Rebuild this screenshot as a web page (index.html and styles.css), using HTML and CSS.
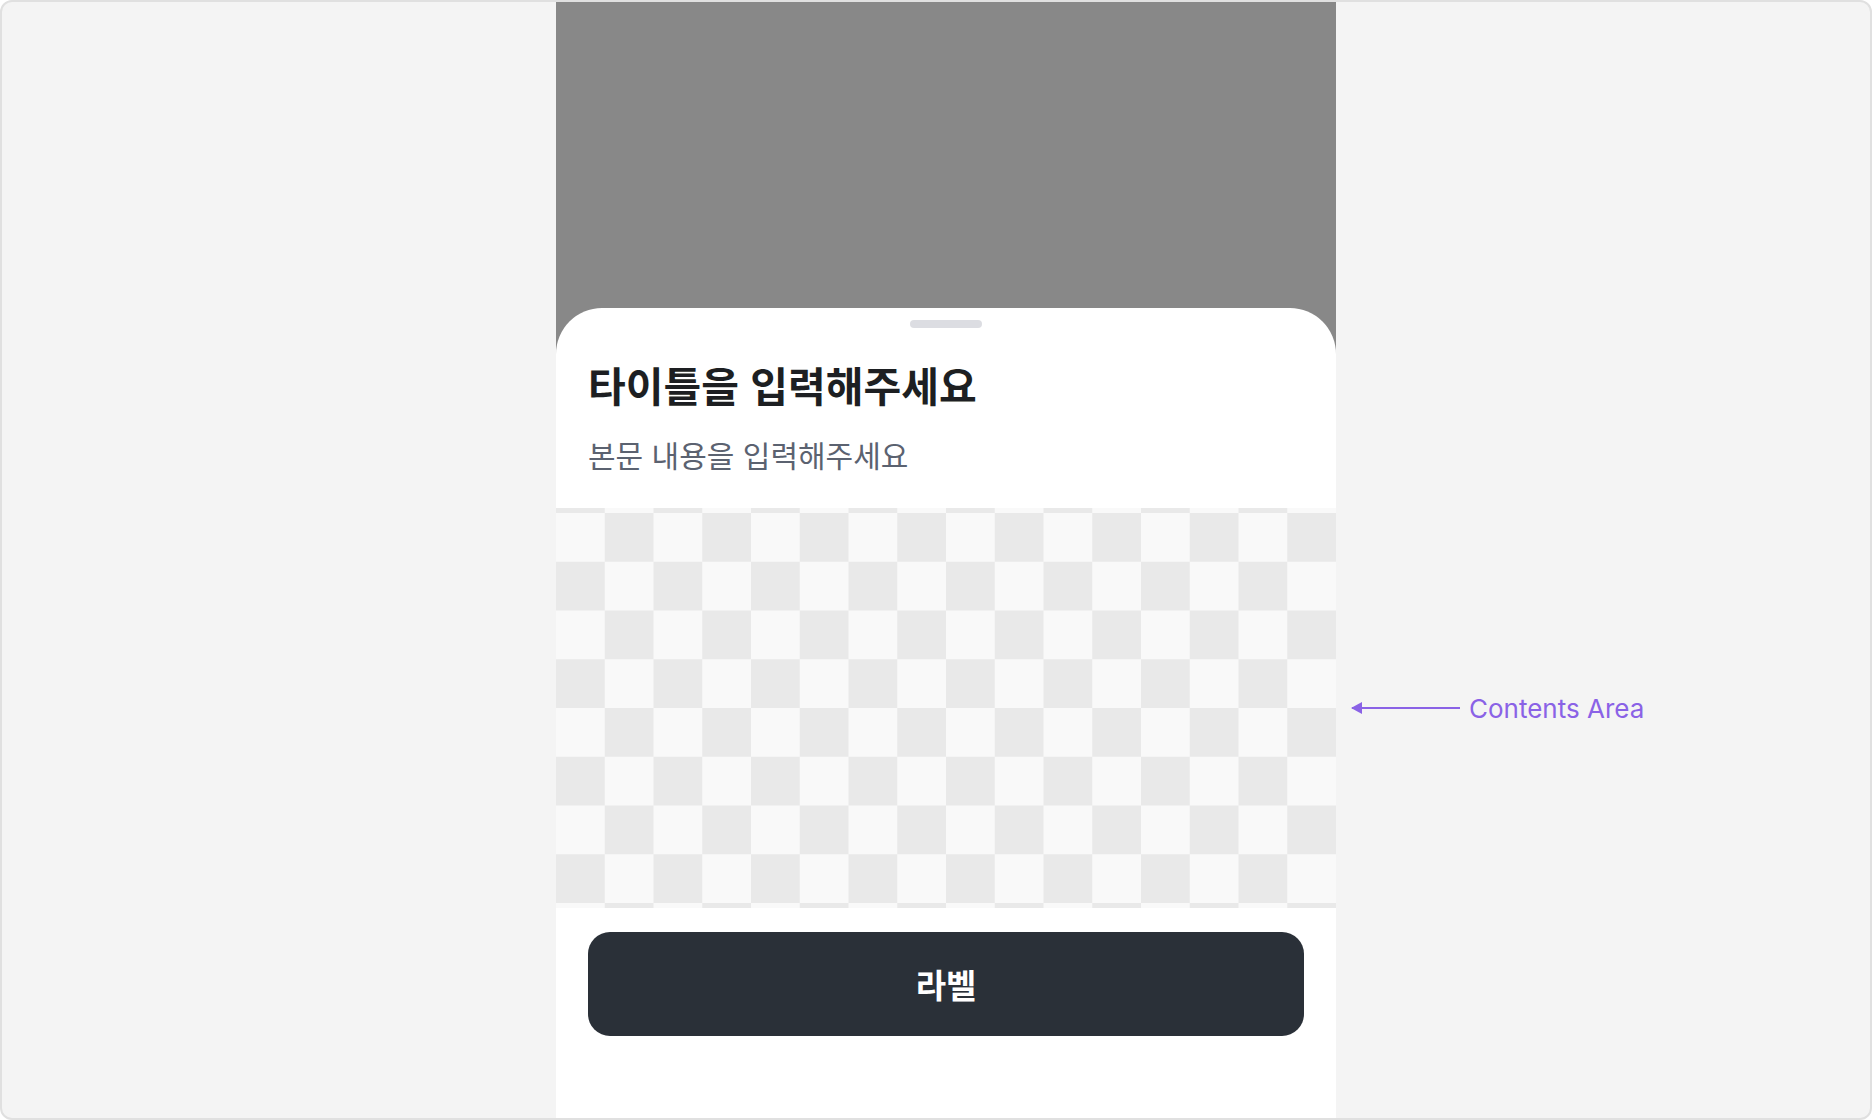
FILE: index.html
```html
<!DOCTYPE html>
<html lang="ko">
<head>
	<meta charset="utf-8">
	<title>Bottom Sheet</title>
	<link rel="stylesheet" href="styles.css">
</head>
<body>
	<div class="frame">
		<div class="side"></div>
		<div class="phone">
			<div class="dim"></div>
			<div class="sheet">
				<div class="handle"></div>
				<div class="top-info">
					<h2>타이틀을 입력해주세요</h2>
					<p>본문 내용을 입력해주세요</p>
				</div>
				<div class="contents"></div>
				<div class="action">
					<button>라벨</button>
				</div>
			</div>
		</div>
		<div class="note">
			<div class="note-row">
				<span class="arrow"></span>
				<label>Contents Area</label>
			</div>
		</div>
	</div>
</body>
</html>
```

FILE: styles.css
```css
*{
	margin: 0;
	padding: 0;
	box-sizing: border-box;
}
body{
	width: 1872px;
	height: 1120px;
	overflow: hidden;
	font-family: Inter, "Noto Sans CJK KR", sans-serif;
}
.frame{
	display: grid;
	grid-template-columns: 554px 780px 1fr;
	width: 1872px;
	height: 1120px;
	background-color: #f4f4f4;
	border: 2px solid #e0e0e0;
	border-radius: 12px;
	overflow: hidden;
}
.phone{
	display: flex;
	flex-direction: column;
	background-color: #888888;
	margin-top: -2px;
	margin-bottom: -2px;
}
.dim{
	height: 308px;
	flex-shrink: 0;
}
.sheet{
	flex: 1;
	display: flex;
	flex-direction: column;
	align-items: center;
	background-color: #ffffff;
	border-radius: 46px 46px 0 0;
}
.handle{
	width: 72px;
	height: 8px;
	margin-top: 12px;
	border-radius: 4px;
	background-color: #dcdde2;
}
.top-info{
	align-self: stretch;
	padding: 0 32px;
	height: 180px;
}
.top-info > h2{
	margin-top: 30px;
	font-family: "Noto Sans CJK KR", sans-serif;
	font-size: 41px;
	font-weight: 700;
	line-height: 52px;
	color: #1d1f22;
}
.top-info > p{
	margin-top: 26px;
	font-family: "Noto Sans CJK KR", sans-serif;
	font-size: 30px;
	font-weight: 400;
	line-height: 36px;
	color: #5b6270;
}
.contents{
	align-self: stretch;
	height: 400px;
	flex-shrink: 0;
	background-color: #f9f9f9;
	background-image: conic-gradient(#e9e9e9 0 25%, #f9f9f9 0 50%, #e9e9e9 0 75%, #f9f9f9 0);
	background-size: 97.5px 97.5px;
	background-position: 0 5px;
}
.action{
	align-self: stretch;
	padding: 24px 32px 0;
}
.action > button{
	width: 100%;
	height: 104px;
	border: none;
	border-radius: 22px;
	background-color: #2a3038;
	color: #ffffff;
	font-family: "Noto Sans CJK KR", sans-serif;
	font-size: 33px;
	font-weight: 700;
	cursor: pointer;
}
.note{
	padding-top: 506px;
	height: 906px;
	display: flex;
	align-items: center;
}
.note-row{
	display: flex;
	align-items: center;
	margin-left: 16px;
}
.arrow{
	position: relative;
	width: 108px;
	height: 2px;
	background-color: #8a62e6;
}
.arrow::before{
	content: "";
	position: absolute;
	left: -1px;
	top: -5px;
	border-top: 6px solid transparent;
	border-bottom: 6px solid transparent;
	border-right: 11px solid #8a62e6;
}
.note-row > label{
	margin-left: 9px;
	font-size: 26px;
	color: #8a62e6;
}
```
